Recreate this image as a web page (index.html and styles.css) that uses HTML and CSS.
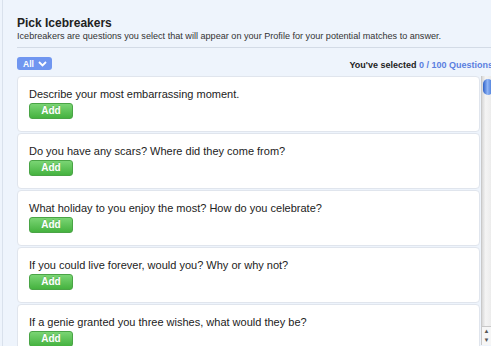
FILE: index.html
```html
<!DOCTYPE html>
<html lang="en">
<head>
    <meta charset="UTF-8">
    <title>Pick Icebreakers</title>
    <link rel="stylesheet" href="styles.css">
</head>
<body>
    <div class="page">
        <div class="header">
            <h1>Pick Icebreakers</h1>
            <p class="intro">Icebreakers are questions you select that will appear on your Profile for your potential matches to answer.</p>
        </div>

        <div class="toolbar">
            <button class="filter">All
                <svg width="9" height="6" viewBox="0 0 9 6"><path d="M1 1l3.5 3.5L8 1" fill="none" stroke="#fff" stroke-width="1.8"/></svg>
            </button>
            <span class="count">You've selected <span class="num">0 / 100 Questions</span></span>
        </div>

        <div class="list-wrap">
            <ul class="list">
                <li class="card">
                    <p>Describe your most embarrassing moment.</p>
                    <button class="add">Add</button>
                </li>
                <li class="card">
                    <p>Do you have any scars? Where did they come from?</p>
                    <button class="add">Add</button>
                </li>
                <li class="card">
                    <p>What holiday to you enjoy the most? How do you celebrate?</p>
                    <button class="add">Add</button>
                </li>
                <li class="card">
                    <p>If you could live forever, would you? Why or why not?</p>
                    <button class="add">Add</button>
                </li>
                <li class="card">
                    <p>If a genie granted you three wishes, what would they be?</p>
                    <button class="add">Add</button>
                </li>
            </ul>
            <div class="scrollbar">
                <div class="thumb"></div>
                <div class="arrows">
                    <span>&#9650;</span>
                    <span>&#9660;</span>
                </div>
            </div>
        </div>
    </div>
</body>
</html>
```

FILE: styles.css
```css
body {
    margin: 0;
    background-color: #eef4fc;
    font-family: 'Liberation Sans', Arial, sans-serif;
    color: #222;
    overflow: hidden;
}
.page {
    height: 346px;
    margin-left: 2px;
    border-left: 1px solid #d9e1ec;
    padding-left: 14px;
}
.header {
    padding-top: 16px;
    padding-bottom: 6px;
    border-bottom: 1px solid #d3dbe6;
}
h1 {
    margin: 0;
    font-size: 12px;
    line-height: 15px;
    font-weight: bold;
    color: #222;
}
.intro {
    margin: 0;
    font-size: 9.1px;
    line-height: 10px;
    color: #333;
    white-space: nowrap;
}
.toolbar {
    display: flex;
    justify-content: space-between;
    align-items: flex-end;
    padding-top: 9px;
    height: 13px;
}
.filter {
    display: flex;
    align-items: center;
    gap: 4px;
    height: 13px;
    padding: 0 5px 0 6px;
    border: none;
    border-radius: 3px;
    background-color: #7096f0; /* blue pill */
    color: #fff;
    font-family: inherit;
    font-size: 8.5px;
    font-weight: bold;
}
.count {
    font-size: 9px;
    font-weight: bold;
    color: #222;
    white-space: nowrap;
    margin-right: -2px;
    line-height: 10px;
}
.count .num {
    color: #5b7fe0;
}
.list-wrap {
    display: flex;
    margin-top: 6px;
}
.list {
    list-style: none;
    margin: 0;
    padding: 0;
    width: 464px;
}
.card {
    background: #fff;
    border: 1px solid #e0e5ed;
    border-radius: 4px;
    padding: 11px 11px 12px;
    margin-bottom: 1px;
    height: 31px;
}
.card p {
    margin: 0 0 2px;
    font-size: 11px;
    line-height: 13px;
    color: #222;
}
.add {
    display: block;
    width: 44px;
    height: 16px;
    padding: 0;
    border: 1px solid #4aa446;
    border-radius: 3px;
    background: linear-gradient(#7ad574, #45b23f); /* green */
    color: #fff;
    font-family: inherit;
    font-size: 10px;
    font-weight: bold;
    line-height: 14px;
    text-shadow: 0 -1px 0 rgba(0,0,0,0.15);
}
.scrollbar {
    position: relative;
    width: 9px;
    margin-left: 1px;
    height: 269px;
    background: linear-gradient(to right, #d8d8d8, #f4f4f4 40%, #ececec);
    border-left: 1px solid #c9c9c9;
}
.thumb {
    position: absolute;
    top: 3px;
    left: 1px;
    width: 10px;
    height: 16px;
    border-radius: 5px;
    background: linear-gradient(to right, #2f62c8, #8fb4f5 45%, #3a6fd3);
}
.arrows {
    position: absolute;
    bottom: 0;
    left: 0;
    width: 9px;
    display: flex;
    flex-direction: column;
    border-top: 1px solid #c8c8c8;
    background: #f6f6f6;
}
.arrows span {
    font-size: 6px;
    line-height: 9px;
    text-align: center;
    color: #555;
}
```
